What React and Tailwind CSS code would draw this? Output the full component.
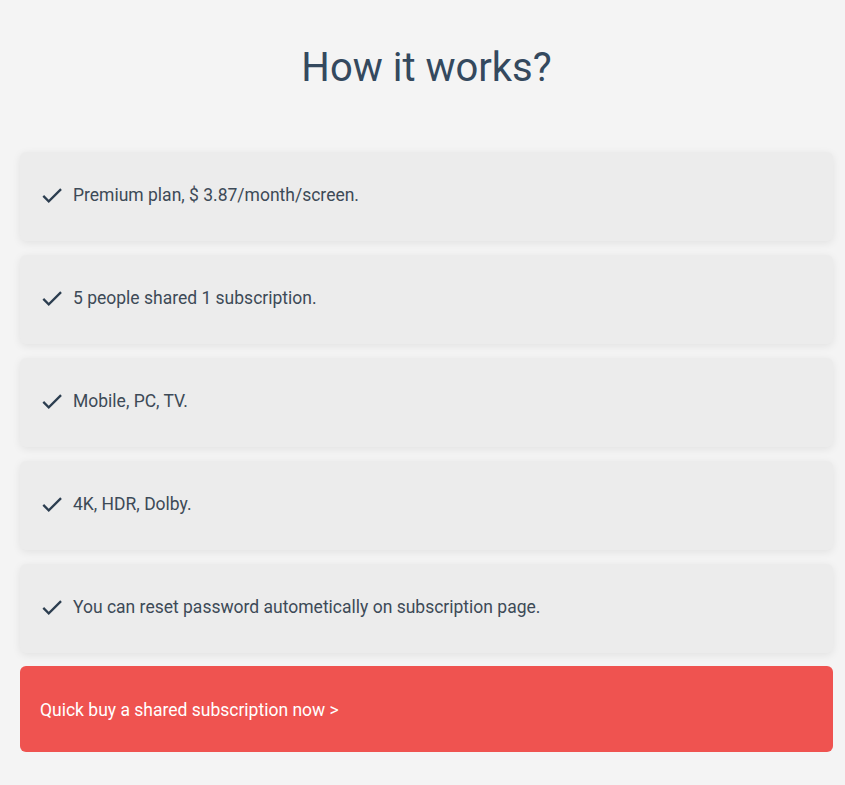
const items = [
  "Premium plan, $ 3.87/month/screen.",
  "5 people shared 1 subscription.",
  "Mobile, PC, TV.",
  "4K, HDR, Dolby.",
  "You can reset password autometically on subscription page.",
];

const CheckIcon = () => (
  <svg viewBox="0 0 24 24" className="w-[26px] h-[26px] shrink-0 fill-[#2c3e50]">
    <path d="M9 16.4 4.7 12.1l-1.5 1.5L9 19.4 21.1 7.3l-1.5-1.5L9 16.4z" />
  </svg>
);

const App = () => {
  return (
    <main
      className="min-h-screen bg-[#f4f4f4] pl-5 pr-3 pt-[40px] pb-8"
      style={{ fontFamily: "Roboto, 'Liberation Sans', sans-serif" }}
    >
      <h1 className="text-center text-[40px] leading-[56px] text-[#34495e] font-normal">
        How it works?
      </h1>
      <section className="mt-[56px] flex flex-col gap-[14px]">
        {items.map((text) => (
          <div
            key={text}
            className="h-[89px] flex items-center gap-[8px] pl-[19px] pr-6 pb-[3px] rounded-md bg-[#ececec] shadow-[0_2px_8px_rgba(0,0,0,0.08)]"
          >
            <CheckIcon />
            <span className="text-[17.5px] text-[#3d4a57]">{text}</span>
          </div>
        ))}
        <a
          href="#"
          className="-mt-px h-[86px] flex items-center px-5 pt-[2px] rounded-md bg-[#ef5350] text-white text-[17.5px]"
        >
          Quick buy a shared subscription now &gt;
        </a>
      </section>
    </main>
  );
};

export default App;
